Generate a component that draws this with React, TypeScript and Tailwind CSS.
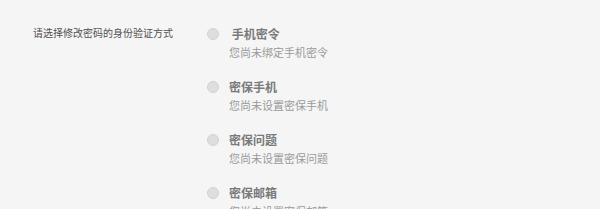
import React from "react";

const options = [
  { title: "\u00a0手机密令", desc: "您尚未绑定手机密令" },
  { title: "密保手机", desc: "您尚未设置密保手机" },
  { title: "密保问题", desc: "您尚未设置密保问题" },
  { title: "密保邮箱", desc: "您尚未设置密保邮箱" },
];

export default function App() {
  return (
    <div
      className="w-[600px] h-[209px] overflow-hidden bg-[#f5f5f5] flex pt-[25px] pl-[33px]"
      style={{ fontFamily: '"Noto Sans CJK SC", "Noto Sans", sans-serif' }}
    >
      <div className="w-[174px] shrink-0 text-[10px] leading-[15px] text-[#505050] whitespace-nowrap">
        请选择修改密码的身份验证方式
      </div>
      <div className="flex flex-col gap-[17px]">
        {options.map((o) => (
          <div key={o.desc} className="flex gap-[10px]">
            <div className="mt-[3px] w-[12px] h-[12px] rounded-full bg-[#dedede] border border-[#d2d2d2] shrink-0" />
            <div className="flex flex-col">
              <div className="text-[12px] leading-[18px] font-bold text-[#7a7a7a] whitespace-nowrap">
                {o.title}
              </div>
              <div className="text-[11px] leading-[18px] text-[#9a9a9a] whitespace-nowrap">
                {o.desc}
              </div>
            </div>
          </div>
        ))}
      </div>
    </div>
  );
}
